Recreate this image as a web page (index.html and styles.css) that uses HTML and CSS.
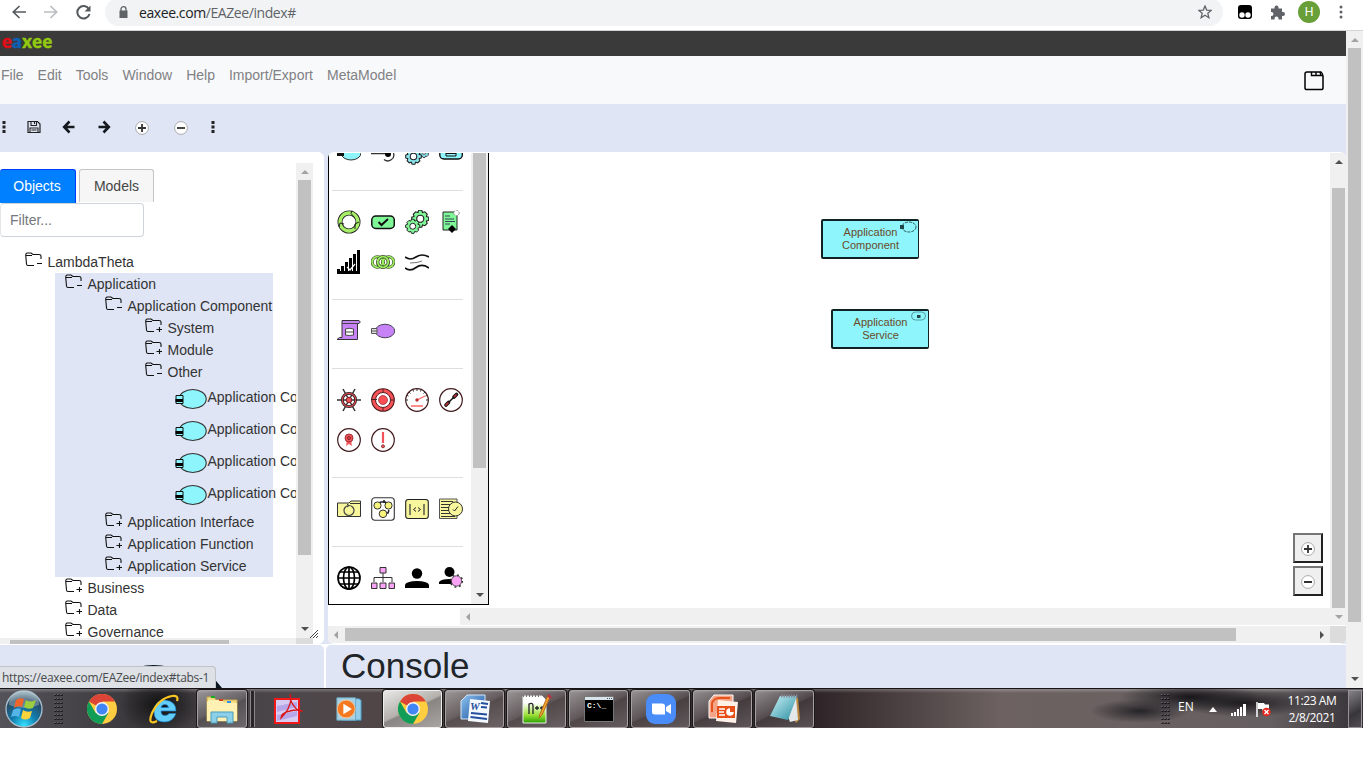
FILE: index.html
```html
<!DOCTYPE html>
<html lang="en">
<head>
<meta charset="utf-8">
<title>eaxee</title>
<link rel="stylesheet" href="styles.css">
</head>
<body>
<svg class="defs" width="0" height="0">
  <defs>
    <symbol id="folder-minus" viewBox="0 0 18 16"><path d="M4 13.500H3Q1.700 13.500 1.500 12L.7 3Q.7 1.500 2 1H6L8 2.500H14Q16 2.500 16 4V7M1 3.500H7M4 13.500H9M12 11.500H17" fill="none" stroke="#111" stroke-width="1.100"/></symbol>
    <symbol id="folder-plus" viewBox="0 0 18 16"><path d="M4 13.500H3Q1.700 13.500 1.500 12L.7 3Q.7 1.500 2 1H6L8 2.500H14Q16 2.500 16 4V7M1 3.500H7M4 13.500H9M11.500 11.500H17M14.500 9V14" fill="none" stroke="#111" stroke-width="1.100"/></symbol>
    <symbol id="component" viewBox="0 0 34 22"><ellipse cx="18.700" cy="11" rx="13.500" ry="9.500" fill="#8df5fb" stroke="#333" stroke-width="1.100"/><path d="M2 7.500H9V15.500H2Z" fill="#8df5fb" stroke="#111"/><path d="M1.500 11H9V14H1.500Z" fill="#000"/></symbol>
    <symbol id="plus" viewBox="0 0 14 14"><circle cx="7" cy="7" r="6.400" fill="#fff" stroke="#aaa"/><path d="M3 7H11M7 3V11" stroke="#333" stroke-width="1.800"/></symbol>
    <symbol id="minus" viewBox="0 0 14 14"><circle cx="7" cy="7" r="6.400" fill="#fff" stroke="#aaa"/><path d="M3 7H11" stroke="#333" stroke-width="1.800"/></symbol>
    <symbol id="dots" viewBox="0 0 4 12"><path d="M.5 0H3.500V3H.5ZM.5 4.500H3.500V7.500H.5ZM.5 9H3.500V12H.5Z" fill="#222"/></symbol>
    <symbol id="gear" viewBox="-12 -12 24 24"><path d="M-2-11H2L3-8 6-9 9-6 8-3 11-2V2L8 3 9 6 6 9 3 8 2 11H-2L-3 8-6 9-9 6-8 3-11 2V-2L-8-3-9-6-6-9-3-8Z" fill="currentColor" stroke="#222" stroke-width="1.500"/><circle r="4.600" fill="#fff" stroke="#222" stroke-width="1.500"/></symbol>
    <symbol id="chrome" viewBox="0 0 30 30"><circle cx="15" cy="15" r="15" fill="#ffcd40"/><path d="M15 15L2 7.500A15 15 0 0 1 28 7.500H15Z" fill="#db4437"/><path d="M2 7.500A15 15 0 0 0 15 30L21.500 18.700 8.500 18.700Z" fill="#0f9d58"/><circle cx="15" cy="15" r="7" fill="#f4f4f4"/><circle cx="15" cy="15" r="5.600" fill="#4285f4"/></symbol>
    <symbol id="grip" viewBox="0 0 9 32"><path d="M1.500 1V32M4.500 1V32M7.500 1V32" stroke="#15131a" stroke-width="2" stroke-dasharray="2 2"/><path d="M1 1V32M4 1V32M7 1V32" stroke="#99959a" stroke-width="1" stroke-dasharray="1 3"/></symbol>
    <linearGradient id="np" x2="0" y2="1"><stop offset=".25" stop-color="#fff"/><stop offset=".7" stop-color="#9de038"/><stop offset="1" stop-color="#28a000"/></linearGradient>
    <linearGradient id="pad" x2="1" y2="1"><stop stop-color="#c9f2f8"/><stop offset="1" stop-color="#2c8ea0"/></linearGradient>
    <linearGradient id="wb" x2="1" y2="1"><stop stop-color="#8fc4ee"/><stop offset="1" stop-color="#144b9d"/></linearGradient>
    <radialGradient id="orb" cy=".95" r=".9"><stop stop-color="#34e2ff"/><stop offset=".4" stop-color="#117cae"/><stop offset=".8" stop-color="#284962"/><stop offset="1" stop-color="#7c9aaa"/></radialGradient>
  </defs>
</svg>

<header class="browser">
  <svg class="ic back" viewBox="0 0 14 14"><path d="M14 7H1.500M7.500 1L1.300 7 7.500 13" fill="none" stroke="#55585c" stroke-width="1.700"/></svg>
  <svg class="ic fwd" viewBox="0 0 14 14"><path d="M0 7H12.500M6.500 1L12.700 7 6.500 13" fill="none" stroke="#bbbdc0" stroke-width="1.700"/></svg>
  <svg class="ic reload" viewBox="0 0 15 15"><path d="M12.800 4A6.200 6.200 0 1 0 13.500 9" fill="none" stroke="#55585c" stroke-width="2"/><path d="M14.500 .5V6.500H8.500Z" fill="#55585c"/></svg>
  <div class="address">
    <svg class="lock" viewBox="0 0 9 12"><path d="M.5 4.500H8.500V12H.5Z" fill="#5f6368"/><path d="M2 5V3A2.500 2.300 0 0 1 7 3V5" fill="none" stroke="#5f6368" stroke-width="1.300"/></svg>
    <span class="url"><b>eaxee.com</b>/EAZee/index#</span>
    <svg class="star" viewBox="0 0 14 14"><path d="M7 1L8.700 5.100 13.200 5.400 9.800 8.300 10.900 12.700 7 10.300 3.100 12.700 4.200 8.300 .8 5.400 5.300 5.100Z" fill="none" stroke="#5f6368" stroke-width="1.300"/></svg>
  </div>
  <svg class="ic ext" viewBox="0 0 14 14"><rect width="14" height="14" rx="3" fill="#000"/><circle cx="4" cy="10" r="2.700" fill="#fff"/><circle cx="10" cy="10" r="2.700" fill="#fff"/></svg>
  <svg class="ic puzzle" viewBox="0 0 15 15"><path d="M1 3.500H4.500V2.500A2 2 0 0 1 8.500 2.500V3.500H12V7H13A2 2 0 0 1 13 11H12V14.500H8.500V13.500A2 2 0 0 0 4.500 13.500V14.500H1V11H1.500A2 2 0 0 0 1.500 7H1Z" fill="#5f6368"/></svg>
  <span class="avatar">H</span>
  <svg class="ic menu" viewBox="0 0 4 14"><circle cx="2" cy="2" r="1.500" fill="#5f6368"/><circle cx="2" cy="7" r="1.500" fill="#5f6368"/><circle cx="2" cy="12" r="1.500" fill="#5f6368"/></svg>
</header>

<div class="viewport">
  <div class="page">
    <div class="brand"><span class="r">e</span><span class="b">a</span><span class="g">xee</span></div>
    <nav class="nav">
      <a>File</a><a>Edit</a><a>Tools</a><a>Window</a><a>Help</a><a>Import/Export</a><a>MetaModel</a>
      <svg class="windows" viewBox="0 0 20 20"><path d="M17 1H3Q1 1 1 3V17Q1 18.600 3 18.600H17Q19 18.600 19 17V5Q18.500 2 17 1Z" fill="none" stroke="#000" stroke-width="1.500"/><path d="M7.500 1V4.500H19M12 1V4.500M16 1L17 4.500" fill="none" stroke="#000" stroke-width="1.400"/></svg>
    </nav>
    <div class="toolbar">
      <svg class="dots"><use href="#dots"/></svg>
      <svg class="save" viewBox="0 0 14 14"><path d="M1 1.500H10.500L13 4V12.500H1Z" fill="none" stroke="#222" stroke-width="1.200"/><path d="M4 1V5.500H9.500V1M7.500 1V4M3 12.500V8H11V12.500M4.500 10H9.500" fill="none" stroke="#222" stroke-width="1.100"/></svg>
      <svg class="tb" viewBox="0 0 14 14"><path d="M12.500 7H3M7.500 1.500L2.200 7 7.500 12.500" fill="none" stroke="#15181c" stroke-width="2.600"/></svg>
      <svg class="tb" viewBox="0 0 14 14"><path d="M1.500 7H11M6.500 1.500L11.800 7 6.500 12.500" fill="none" stroke="#15181c" stroke-width="2.600"/></svg>
      <svg class="zin"><use href="#plus"/></svg>
      <svg class="zout"><use href="#minus"/></svg>
      <svg class="dots last"><use href="#dots"/></svg>
    </div>

    <div class="workspace">
      <aside class="explorer">
        <div class="explorer-row">
          <div class="explorer-body">
            <div class="tabs"><span class="tab on">Objects</span><span class="tab">Models</span></div>
            <div class="filter">Filter...</div>
            <div class="tree">
              <div class="node l0"><svg><use href="#folder-minus"/></svg>LambdaTheta</div>
              <div class="selected">
                <div class="node l1"><svg><use href="#folder-minus"/></svg>Application</div>
                <div class="node l2"><svg><use href="#folder-minus"/></svg>Application Component</div>
                <div class="node l3"><svg><use href="#folder-plus"/></svg>System</div>
                <div class="node l3"><svg><use href="#folder-plus"/></svg>Module</div>
                <div class="node l3"><svg><use href="#folder-minus"/></svg>Other</div>
                <div class="leaf"><svg><use href="#component"/></svg>Application Component</div>
                <div class="leaf"><svg><use href="#component"/></svg>Application Component</div>
                <div class="leaf"><svg><use href="#component"/></svg>Application Component</div>
                <div class="leaf"><svg><use href="#component"/></svg>Application Component</div>
                <div class="node l2"><svg><use href="#folder-plus"/></svg>Application Interface</div>
                <div class="node l2"><svg><use href="#folder-plus"/></svg>Application Function</div>
                <div class="node l2"><svg><use href="#folder-plus"/></svg>Application Service</div>
              </div>
              <div class="node out"><svg><use href="#folder-plus"/></svg>Business</div>
              <div class="node out"><svg><use href="#folder-plus"/></svg>Data</div>
              <div class="node out"><svg><use href="#folder-plus"/></svg>Governance</div>
            </div>
          </div>
          <div class="vs vs-tree"><i class="up pale"></i><div class="thumb"></div><i class="down"></i></div>
          <svg class="resize" viewBox="0 0 8 8"><path d="M0 8L8 0M3 8L8 3M6 8L8 6" stroke="#444"/></svg>
        </div>
        <div class="hs-tree"><div class="thumb"></div><div class="corner"></div></div>
      </aside>

      <main class="designer">
        <div class="upper">
          <div class="canvas-wrap">
            <div class="palette">
              <div class="palette-body">
                <div class="group first">
                  <svg viewBox="0 0 24 24"><ellipse cx="14" cy="12" rx="10" ry="7" fill="#8df5fb" stroke="#333"/><path d="M0 9H7V15H0Z" fill="#111"/></svg>
                  <svg viewBox="0 0 24 24"><path d="M0 12.500H18M22.500 12A6 6 0 0 1 13 18.500" fill="none" stroke="#333" stroke-width="1.300"/><circle cx="17" cy="13" r="3"/></svg>
                  <svg viewBox="0 0 24 24" class="aqua"><use href="#gear" x="13" y="4" width="12" height="14"/><use href="#gear" x="0" y="7" width="17" height="17"/></svg>
                  <svg viewBox="0 0 24 24"><rect x=".8" y="5" width="22.500" height="13" rx="4" fill="#8df5fb" stroke="#111" stroke-width="1.400"/><path d="M7 10H17V15H7ZM7 12.500H17" fill="none" stroke="#111"/></svg>
                </div>
                <div class="group">
                  <svg viewBox="0 0 24 24"><g fill="none"><circle cx="12" cy="12" r="9" stroke="#222" stroke-width="5"/><circle cx="12" cy="12" r="9" stroke="#a8ef68" stroke-width="3.300"/><path d="M15 .500L14 3.500 17.500 7.500M2 17L3 13 7 14M22 12L18 14 18 19" stroke="#222" stroke-width="1"/></g></svg>
                  <svg viewBox="0 0 24 24"><rect x=".8" y="6" width="22.500" height="12.500" rx="4" fill="#80f797" stroke="#111" stroke-width="1.500"/><path d="M7.500 12L10.500 15 17 9" fill="none" stroke="#111" stroke-width="2"/></svg>
                  <svg viewBox="0 0 24 24" class="mint"><use href="#gear" x="6" y="-.5" width="18.500" height="18.500"/><use href="#gear" x="0" y="8.500" width="15.500" height="15.500"/></svg>
                  <svg viewBox="0 0 24 24"><path d="M4 2H18V20H4Z" fill="#80f797" stroke="#222"/><path d="M6 6H11M6 9H15M6 11.500H16M6 14H11" stroke="#345"/><circle cx="17.500" cy="3" r="2.700" fill="#fff" stroke="#777" stroke-width=".8" stroke-dasharray="2 1"/><path d="M13 15L17 19 13 23 9 19Z"/></svg>
                  <svg viewBox="0 0 24 24"><path d="M0 24V19H3V24ZM4 24V16H7V24ZM8 24V12H11V24ZM12 24V8H15V24ZM16 24V4H19V24ZM20 24V0H23V24ZM3 21H22V24H3Z"/><path d="M10 17L13 20 18 14" fill="none" stroke="#fff" stroke-width="1.200"/></svg>
                  <svg viewBox="0 0 24 24"><g fill="none"><g stroke="#342" stroke-width="3"><circle cx="6.500" cy="12" r="5.300"/><circle cx="17.500" cy="12" r="5.300"/><circle cx="12" cy="12" r="5.300"/></g><g stroke="#9dec60" stroke-width="1.800"><circle cx="6.500" cy="12" r="5.300"/><circle cx="17.500" cy="12" r="5.300"/></g><circle cx="12" cy="12" r="5.300" stroke="#342" stroke-width="3"/><circle cx="12" cy="12" r="5.300" stroke="#9dec60" stroke-width="1.800"/></g></svg>
                  <svg viewBox="0 0 24 24"><path d="M0 7Q5 11 11 7T24 7M0 18Q5 22 11 17.500T24 18" fill="none" stroke="#111" stroke-width="1.700"/><path d="M5 13L12 12.500 17 11" stroke="#555" stroke-width=".8" fill="none"/></svg>
                </div>
                <div class="group">
                  <svg viewBox="0 0 24 24"><path d="M5 1.500H22Q24.500 3 22 4.500H20.500V20.500H0L2.500 18.500H5Z" fill="#c783f5" stroke="#333"/><path d="M5 4.500H22M8.500 10Q12 8.500 16.500 10V16Q12 17 8.500 16Z" fill="#fff" stroke="#444"/><path d="M8.500 13H16.500" stroke="#444"/></svg>
                  <svg viewBox="0 0 24 24"><ellipse cx="14" cy="12" rx="9.700" ry="6.800" fill="#c783f5" stroke="#445"/><path d="M.5 9.500H6V14.500H.5ZM0 12H6" fill="#ddd" stroke="#555"/></svg>
                </div>
                <div class="group">
                  <svg viewBox="0 0 24 24"><path d="M0 12H24M6 1L18 23M18 1L6 23" stroke="#333" stroke-width="1.500"/><circle cx="12" cy="12" r="6.700" fill="none" stroke="#222" stroke-width="2.700"/><circle cx="12" cy="12" r="6.700" fill="none" stroke="#d6484d" stroke-width="1.200"/><circle cx="12" cy="12" r="2.800" fill="#ed5058" stroke="#722"/></svg>
                  <svg viewBox="0 0 24 24"><circle cx="12" cy="12" r="11.300" fill="#fb5257" stroke="#521e20" stroke-width="1.100"/><circle cx="12" cy="12" r="7.500" fill="#fff" stroke="#521e20"/><circle cx="12" cy="12" r="4.500" fill="#fb4f55" stroke="#8b2d31" stroke-width=".7"/><path d="M0 11.500H6M12 1V4M12 20V23M20 12H23" stroke="#422"/></svg>
                  <svg viewBox="0 0 24 24"><circle cx="12" cy="12" r="11.300" fill="#fff" stroke="#421b1d" stroke-width="1.200"/><path d="M3 12H1M21 12H23M12 3V1M5.500 5.500L4 4M18.500 5.500L20 4M3.500 8L2 7.500M20.500 8L22 7.500M8.500 3.500L8 2M15.500 3.500L16 2" stroke="#333"/><path d="M12 12L20 8M6 18H18" stroke="#f66" stroke-width="1.300"/><circle cx="12" cy="12" r="1.700" fill="#b33"/></svg>
                  <svg viewBox="0 0 24 24"><circle cx="12" cy="12" r="11.300" fill="#fff" stroke="#421b1d" stroke-width="1.200"/><path d="M6 18L18 6" stroke="#111" stroke-width="1.500"/><path d="M7 17L9.500 14.500M15 9L17.500 6.500" stroke="#111" stroke-width="3.600" stroke-linecap="round"/><path d="M7 17L9 15M15.500 8.500L17 7" stroke="#a63036" stroke-width="1.800" stroke-linecap="round"/></svg>
                  <svg viewBox="0 0 24 24"><circle cx="12" cy="12" r="11.300" fill="#fff" stroke="#421b1d" stroke-width="1.200"/><path d="M10 12L9 18 12 16 15 18 14 12Z" fill="#f95a5f"/><circle cx="12" cy="10" r="4" fill="#f4545a" stroke="#9e3236"/><circle cx="12" cy="10" r="1.500" fill="none" stroke="#611" stroke-width=".8"/></svg>
                  <svg viewBox="0 0 24 24"><circle cx="12" cy="12" r="11.300" fill="#fff" stroke="#421b1d" stroke-width="1.200"/><path d="M12 4V15" stroke="#f45359" stroke-width="2.200"/><circle cx="12" cy="18.300" r="1.500" fill="#f45359" stroke="#722" stroke-width=".8"/></svg>
                </div>
                <div class="group">
                  <svg viewBox="0 0 24 24"><path d="M.5 6H12L14 4H23.500V19.500H.5Z" fill="#f8f69c" stroke="#333"/><path d="M13 6.500H23" stroke="#333"/><circle cx="12" cy="13.500" r="5" fill="none" stroke="#444" stroke-width="1.200"/><path d="M10 7L12 8.500 10 10" fill="none" stroke="#333"/></svg>
                  <svg viewBox="0 0 24 24"><rect x=".7" y=".7" width="22.600" height="22.600" rx="3" fill="#fff" stroke="#333" stroke-width="1.100"/><path d="M8 6L10 5H14L16 6M13 3V6M18 13L17 16H14" fill="none" stroke="#222" stroke-width="1.500"/><g fill="#f8f47c" stroke="#333"><circle cx="6.500" cy="8.500" r="3.600"/><circle cx="17.500" cy="8.500" r="3.600"/><circle cx="12" cy="16.800" r="3.800"/></g></svg>
                  <svg viewBox="0 0 24 24"><rect x=".7" y="2.500" width="22.600" height="19" rx="2.500" fill="#f8f69c" stroke="#222" stroke-width="1.100"/><path d="M5 7V18M19 7V18" stroke="#333" stroke-width="1.200"/><path d="M11 10.500L8.500 12.500 11 14.500M13 10.500L15.500 12.500 13 14.500" fill="none" stroke="#222"/></svg>
                  <svg viewBox="0 0 24 24"><path d="M.5 2H18V21.500H.5Z" fill="#f8f69c" stroke="#555"/><path d="M2 4.500H14M2 7.500H11M2 10.500H10M2 13.500H10M2 16.500H12M2 19.500H16" stroke="#333"/><circle cx="16.500" cy="12" r="7" fill="#f8f69c" stroke="#333"/><path d="M14 12.500L15.500 14 19 9.500" fill="none" stroke="#222"/></svg>
                </div>
                <div class="group">
                  <svg viewBox="0 0 24 24"><g fill="none" stroke="#000" stroke-width="1.700"><circle cx="12" cy="12" r="11"/><ellipse cx="12" cy="12" rx="5.500" ry="11"/><path d="M12 1V23M1 12H23M3 6H21M3 18H21"/></g></svg>
                  <svg viewBox="0 0 24 24"><path d="M12 6V16M3 16V11.500H21V16" fill="none" stroke="#333"/><path d="M9 1.500H15V7H9ZM.5 17H6V22.500H.5ZM9 17H15V22.500H9ZM18 17H23.500V22.500H18Z" fill="#f8a3f3" stroke="#333"/></svg>
                  <svg viewBox="0 0 24 24"><circle cx="12" cy="7.500" r="5.200"/><path d="M0 22V18.500Q2 15 12 15T24 18.500V22Z"/></svg>
                  <svg viewBox="0 0 24 24"><circle cx="10.500" cy="6" r="5"/><path d="M0 18V16Q2 13 10.500 13L15 14V18Z"/><circle cx="17.500" cy="15" r="6" fill="none" stroke="#333" stroke-width="1.600" stroke-dasharray="1.800 2.900"/><circle cx="17.500" cy="15" r="5.200" fill="#f8a3f3" stroke="#333" stroke-width=".8"/></svg>
                </div>
              </div>
              <div class="vs vs-palette"><div class="thumb"></div><i class="down"></i></div>
            </div>
            <div class="canvas">
              <div class="shape s1">Application<br>Component
                <svg viewBox="0 0 18 12"><ellipse cx="10" cy="6" rx="7" ry="5" fill="none" stroke="#244" stroke-width=".9" stroke-dasharray="3 1"/><path d="M1 4H5V8H1Z" fill="#244"/></svg></div>
              <div class="shape s2">Application<br>Service
                <svg viewBox="0 0 18 12"><rect x="2.500" y="1" width="14" height="8" rx="4" fill="none" stroke="#488" stroke-width=".8"/><path d="M8 4H11.500V7H8Z" fill="#244"/></svg></div>
              <div class="zoomers"><span><svg><use href="#plus"/></svg></span><span><svg><use href="#minus"/></svg></span></div>
            </div>
            <div class="hs-inner"><i class="left pale"></i></div>
          </div>
          <div class="vs vs-canvas"><i class="up"></i><div class="thumb"></div><i class="down pale"></i></div>
        </div>
        <div class="hs-outer"><i class="left pale"></i><div class="thumb"></div><i class="right"></i><div class="corner"></div></div>
      </main>
    </div>

    <div class="bottom">
      <div class="overview">
        <svg class="blob" viewBox="0 0 110 24"><path d="M18 3Q34-1 49 3ZM92 12L102 24H92Z" fill="#0c1720"/></svg>
        <div class="status">https://eaxee.com/EAZee/index#tabs-1</div>
      </div>
      <div class="console">Console</div>
    </div>
  </div>
  <div class="vs vs-page"><i class="up pale"></i><div class="thumb"></div><i class="down"></i></div>
</div>

<footer class="taskbar">
  <svg class="start" viewBox="0 0 38 38"><circle cx="19" cy="19" r="18" fill="url(#orb)" stroke="#a9bfcb" stroke-width="1.300"/><path d="M4 15A15 14 0 0 1 34 15Q19 21 4 15" fill="#fff" opacity=".28"/><path d="M11 10Q15 7 19 9L17 17Q13 15 9 18Z" fill="#f1652a"/><path d="M21 10Q25 13 31 10L28 18Q23 20 19 17Z" fill="#9dce3e"/><path d="M8 20Q12 17 16 19L14 27Q10 25 6 27Z" fill="#55b5e9"/><path d="M18 20Q22 23 27 21L25 28Q20 31 16 28Z" fill="#ffd33c"/></svg>
  <svg class="grip g1"><use href="#grip"/></svg>
  <svg class="pin"><use href="#chrome"/></svg>
  <svg class="pin ie" viewBox="0 0 30 30"><path d="M24 17H12Q12 21.500 16 21.500Q19 21.500 20 19.500H27Q24 28 15.500 28Q5 28 5 17.500Q5 7 15.500 6Q27 7 27 17ZM12 13.500H19.500Q19 10.500 16 10.500Q12.500 10.500 12 13.500" fill="#62cdf9" stroke="#1a7fc4" stroke-width=".7" fill-rule="evenodd"/><path d="M28 7Q30 1 23 2Q10 4 3 19Q-2 32 8 27" fill="none" stroke="#f8c522" stroke-width="2.200"/></svg>
  <div class="task explorer-task"><svg viewBox="0 0 34 30"><path d="M2 3H9L11 6H32V27H2Z" fill="#f4dc85" stroke="#c9a94d"/><path d="M4 6H17L19 9H32V27H2V8Z" fill="#fff1b4"/><path d="M6 2H10V4H6Z" fill="#18aa22"/><path d="M14 5H18V7H14Z" fill="#d24124"/><path d="M22 7H26V9H22Z" fill="#2992e7"/><path d="M6 29V18H28V29H22V23H12V29Z" fill="#8ccfe9" stroke="#499bbb"/></svg></div>
  <span class="stack"></span>
  <svg class="pin pdf" viewBox="0 0 30 30"><path d="M2 5H26V29H2Z" fill="#d7cdf2" stroke="#f01818" stroke-width="2"/><path d="M4 12L24 8V13L4 18ZM4 21L24 17V22L4 27" fill="#a996e5" opacity=".7"/><path d="M17 0L18 5Q17 15 8 24Q8 19 17 17Q24 15 29 17Q23 18 17 5" fill="none" stroke="#d8181b" stroke-width="1.400"/></svg>
  <svg class="pin wmp" viewBox="0 0 30 30"><path d="M8 4H26L28 6V27H8Z" fill="#93cde9" stroke="#3f8db2"/><path d="M2 3H22V27H2Z" fill="#a8d2e4" stroke="#6ba7c3"/><circle cx="12" cy="15" r="9.500" fill="#f3781f" stroke="#fcc08a"/><path d="M9 9.500L18 15 9 20.500Z" fill="#fff"/></svg>
  <div class="tasks">
    <div class="task current"><svg viewBox="0 0 30 30"><use href="#chrome"/></svg></div>
    <div class="task"><svg viewBox="0 0 30 30"><path d="M7 1H25V25H1V7Z" fill="url(#wb)" stroke="#d3e6f8"/><path d="M10 5L30 7 28 29 8 27Z" fill="#f4f8ff"/><path d="M21 9L28 10M21 13L27 13.500M11 19L27 20.500M10.500 23L27 25" stroke="#244f9d" stroke-width="1.800"/><text x="10" y="16" class="office">W</text></svg></div>
    <div class="task"><svg viewBox="0 0 30 30"><path d="M1 2H20L24 6V29H1Z" fill="url(#np)" stroke="#eee"/><path d="M1 2H19" stroke="#777" stroke-width="2" stroke-dasharray="1 2"/><path d="M7 20V10Q11 8 11 12V20M13 14H17M15 12V16M18 14H22M20 12V16" fill="none" stroke="#222" stroke-width="1.300"/><path d="M28 3L20 21 17 24 18 20 26 1Z" fill="#f2a728" stroke="#b86922"/><path d="M25 2L27 0 30 3 28 5" fill="#b63342"/></svg></div>
    <div class="task"><svg viewBox="0 0 30 30"><path d="M.5 2.500H29.500V27.500H.5Z" fill="#000" stroke="#777"/><path d="M1 3H29V6H1Z" fill="#d9e3ea"/><path d="M23 4.500H28" stroke="#456" stroke-dasharray="1 1"/><text x="3" y="14" class="cmd">C:\_</text></svg></div>
    <div class="task"><svg viewBox="0 0 30 30"><rect width="30" height="30" rx="9" fill="#4a8df8"/><path d="M6 9.500H16Q19 9.500 19 12V20.500H9Q6 20.500 6 18ZM20 13L25 10V20L20 17Z" fill="#fff"/></svg></div>
    <div class="task"><svg viewBox="0 0 30 30"><path d="M6 1H25V24H1V7Z" fill="#f5a587" stroke="#fff"/><path d="M4 18V9Q6 4 12 4H22" fill="none" stroke="#e6531c" stroke-width="2"/><path d="M10 6L30 8 28 29 8 27Z" fill="#fff1e7"/><path d="M9 12H27V24H9Z" fill="#e95018"/><path d="M11 15H17M11 18H16M11 21H17" stroke="#fff" stroke-width="1.600"/><circle cx="22" cy="18" r="3.800" fill="#fff"/><path d="M22 18V14H26V18Z" fill="#e95018"/></svg></div>
    <div class="task"><svg viewBox="0 0 30 30"><path d="M11 3L28 4 30 25 26 29Z" fill="#b98942"/><path d="M11 2L26 3 28 26 20 28Z" fill="#e4e8ea"/><path d="M10 2H27L18 26 0 22Z" fill="url(#pad)"/><path d="M11 2H28" stroke="#889" stroke-width="3" stroke-dasharray="1.500 1"/></svg></div>
  </div>
  <svg class="grip g2"><use href="#grip"/></svg>
  <span class="lang">EN</span>
  <svg class="caret" viewBox="0 0 8 5"><path d="M0 5L4 0 8 5Z" fill="#fff"/></svg>
  <svg class="signal" viewBox="0 0 15 12"><path d="M0 12V9H2V12ZM3 12V8H5V12ZM6 12V5H8V12ZM9 12V3H11V12ZM12 12V0H15V12Z" fill="#fff"/></svg>
  <svg class="flag" viewBox="0 0 15 15"><path d="M1 0V15" stroke="#fff" stroke-width="1.500"/><path d="M2 1H8L9 2.500H13V9H7L6 7H2Z" fill="#fff"/><circle cx="10.500" cy="10" r="4.300" fill="#e32a20"/><path d="M8.500 8L12.500 12M12.500 8L8.500 12" stroke="#fff" stroke-width="1.400"/></svg>
  <div class="clock">11:23 AM<br>2/8/2021</div>
  <span class="peek"></span>
</footer>
</body>
</html>
```
FILE: styles.css
```css
* { box-sizing: border-box; }
html { overflow: hidden; background: #fff; }
body { margin: 0; width: 1363px; font: 14px "Liberation Sans", Arial, sans-serif; color: #333; }
svg { display: block; flex: none; }
.defs { position: absolute; }

/* browser bar */
.browser { height: 31px; display: flex; align-items: center; padding: 0 0 6px 12px; border-bottom: 1px solid #d4d4d6; }
.ic { width: 14px; height: 14px; }
.fwd { margin-left: 18px; }
.reload { width: 15px; height: 15px; margin-left: 18px; }
.address { width: 1118px; height: 28px; margin: 0 15px 0 14px; padding: 0 11px 0 14px; display: flex; align-items: center; background: #f1f3f4; border-radius: 14px; }
.lock { width: 9px; height: 12px; }
.url { margin-left: 11px; font: 14px "Open Sans", sans-serif; letter-spacing: -.42px; color: #5f6368; flex: 1; }
.url b { font-weight: 400; color: #202124; }
.star { width: 14px; height: 14px; }
.puzzle { margin-left: 18px; width: 15px; height: 15px; }
.avatar { width: 22px; height: 22px; margin-left: 13px; border-radius: 50%; background: #689f38; color: #fff; font-size: 12px; line-height: 22px; text-align: center; }
.menu { width: 4px; margin-left: 19px; }

.viewport { display: flex; height: 657px; }
.page { width: 1346px; display: flex; flex-direction: column; background: #dfe5f5; }
.brand { height: 25px; background: #3a3a3a; padding-left: 2px; font: 900 18px/20px Lato, sans-serif; letter-spacing: .7px; -webkit-text-stroke: .5px; }
.r { color: #e30d17; }
.b { color: #0a61b8; }
.g { color: #93c90e; }
.nav { height: 48px; padding: 11px 22px 0 1px; display: flex; gap: 14px; background: #f8f9fb; color: #808184; line-height: 17px; }
.windows { width: 20px; height: 20px; margin: 4px 0 0 auto; }
.toolbar { height: 48px; display: flex; align-items: center; padding: 0 0 2px 2px; }
.toolbar svg { width: 14px; height: 14px; margin-left: 21px; }
.toolbar .dots { width: 4px; height: 12px; margin-left: 0; }
.toolbar .zin { margin: 1px 0 0 24px; }
.toolbar .zout { margin: 1px 0 0 25px; }
.toolbar .last { margin-left: 23px; }

/* scrollbars */
.vs { flex: none; background: #f0f0f0; display: flex; flex-direction: column; align-items: center; }
.thumb { background: #c1c1c1; flex: none; }
.vs .thumb { width: 13px; }
.up, .down { border: 4px solid transparent; width: 0; height: 0; flex: none; }
.up { border-top: 0; border-bottom-color: #505050; }
.down { border-bottom: 0; border-top-color: #505050; margin-top: auto; }
.left, .right { border: 4px solid transparent; width: 0; height: 0; flex: none; }
.left { border-left: 0; border-right-color: #505050; }
.right { border-right: 0; border-left-color: #505050; }
.up.pale { border-bottom-color: #a3a3a3; }
.down.pale { border-top-color: #a3a3a3; }
.left.pale { border-right-color: #a3a3a3; }
.corner { background: #dcdcdc; flex: none; }
.vs-page { width: 17px; padding: 7px 0; }
.vs-page .thumb { height: 574px; margin-top: 6px; }

/* object explorer */
.workspace { display: flex; gap: 4px; height: 492px; }
.explorer { width: 324px; height: 492px; padding-top: 11px; background: #fff; border-radius: 0 6px 6px 0; overflow: hidden; }
.explorer-row { display: flex; height: 475px; align-items: flex-end; }
.explorer-body { width: 296px; height: 475px; overflow: hidden; padding-top: 6px; }
.tabs { display: flex; gap: 3px; height: 34px; }
.tab { width: 75px; height: 33px; border: 1px solid #c5c5c5; border-bottom: 0; border-radius: 3px 3px 0 0; background: #f6f6f6; color: #454545; text-align: center; line-height: 33px; }
.tab.on { width: 76px; height: 34px; background: #007fff; border-color: #003eff; border-left: 0; color: #fff; padding-right: 1px; }
.filter { width: 144px; height: 34px; border: 1px solid #ced4da; border-left-color: #e4e7ea; border-radius: 4px; padding-left: 9px; line-height: 32px; color: #74787d; }
.tree { padding-top: 14px; }
.node { height: 22px; display: flex; align-items: center; line-height: 22px; white-space: nowrap; }
.node svg { width: 18px; height: 16px; margin: -5px 4.500px 0 0; }
.l0 { padding-left: 25px; }
.selected { margin-left: 55px; width: 218px; background: #dfe5f5; }
.l1 { padding-left: 10px; }
.l2 { padding-left: 50px; }
.l3 { padding-left: 90px; }
.out { padding-left: 65px; }
.leaf { height: 32px; padding-left: 119px; display: flex; line-height: 28px; white-space: nowrap; }
.leaf svg { width: 34px; height: 22px; margin: 5px -.5px 0 0; }
.vs-tree { width: 17px; height: 475px; padding: 7px 0 7px; }
.vs-tree .thumb { height: 375px; margin-top: 6px; }
.resize { width: 8px; height: 8px; margin-left: -3px; }
.hs-tree { width: 313px; height: 6px; padding: 2px 0 0 10px; background: #f0f0f0; display: flex; }
.hs-tree .thumb { width: 219px; height: 4px; }
.hs-tree .corner { width: 17px; height: 6px; margin: -2px 0 0 auto; }

/* designer */
.designer { width: 1018px; height: 492px; padding-top: 1px; background: #fff; border-radius: 6px; overflow: hidden; display: flex; flex-direction: column; }
.upper { display: flex; height: 472px; }
.canvas-wrap { width: 1002px; height: 472px; display: flex; flex-wrap: wrap; align-content: flex-start; }
.palette { width: 161px; height: 452px; border: 1px solid #000; border-top: 0; display: flex; }
.palette-body { width: 142px; height: 451px; overflow: hidden; padding: 0 0 0 3px; }
.group { width: 131px; border-top: 1px solid #dedede; padding: 19px 0 25px 5px; display: grid; grid-template-columns: repeat(4, 24px); column-gap: 10px; row-gap: 16px; }
.group svg { width: 24px; height: 24px; }
.group.first { margin-top: -32px; border-top-color: transparent; }
.aqua { color: #8be5ee; }
.mint { color: #80f797; }
.vs-palette { width: 17px; height: 451px; padding-bottom: 7px; }
.vs-palette .thumb { height: 315px; }
.canvas { width: 841px; height: 455px; position: relative; }
.shape { position: absolute; width: 98px; height: 40px; border: 1.500px solid #122; border-width: 2px 1px 2px 2px; border-radius: 2px; background: #8df5fb; color: #6b4a28; font-size: 11px; line-height: 13px; text-align: center; padding-top: 5px; }
.shape svg { position: absolute; right: 1px; top: 0; width: 18px; height: 12px; }
.s1 { left: 332px; top: 66px; }
.s2 { left: 342px; top: 156px; }
.zoomers { position: absolute; left: 804px; top: 380px; display: grid; gap: 3px; }
.zoomers span { width: 30px; height: 30px; border: 2px solid; border-color: #767676 #212121 #212121 #767676; background: #efefef; display: grid; place-items: center; padding-top: 1px; }
.zoomers svg { width: 14px; height: 14px; }
.hs-inner { width: 870px; height: 17px; margin-left: 132px; padding-left: 6px; background: #f0f0f0; display: flex; align-items: center; }
.vs-canvas { width: 16px; height: 472px; padding: 7px 0 6px 1px; }
.vs-canvas .thumb { height: 420px; margin-top: 24px; }
.hs-outer { height: 17px; margin-top: 1px; padding-left: 6px; background: #f0f0f0; display: flex; align-items: center; }
.hs-outer .thumb { width: 891px; height: 13px; margin-left: 7px; }
.hs-outer .right { margin-left: auto; }
.hs-outer .corner { width: 16px; height: 17px; margin-left: 6px; }

/* bottom panels */
.bottom { flex: 1; min-height: 0; padding-top: 1px; background: #fff; display: flex; gap: 2px; }
.overview { width: 324px; background: #dfe5f5; border-radius: 0 5px 0 0; display: flex; flex-direction: column; justify-content: flex-end; position: relative; overflow: hidden; }
.blob { position: absolute; left: 120px; top: 19px; width: 110px; height: 24px; }
.status { position: relative; width: 216px; height: 22px; border: 1px solid #bfc2c7; border-left: 0; border-bottom: 0; border-radius: 0 4px 0 0; background: #dee1e6; color: #484a4d; font: 12px/21px "Open Sans", sans-serif; letter-spacing: -.3px; padding-left: 2px; white-space: nowrap; }
.console { width: 1020px; background: #dfe5f5; border-radius: 5px 0 0 0; padding-left: 15px; font-size: 35px; line-height: 42px; color: #212529; overflow: hidden; }

/* taskbar */
.taskbar { height: 40px; display: flex; align-items: center; padding-left: 5px; border-top: 1px solid #171417; color: #fff;
  background: radial-gradient(ellipse 70px 14px at 1190px 8px, #17161a, transparent), radial-gradient(ellipse 70px 14px at 1245px 14px, #1d1b1e, transparent), radial-gradient(ellipse 50px 12px at 1140px 22px, #252327, transparent), radial-gradient(ellipse 40px 30px at 160px 16px, #111, transparent), linear-gradient(rgba(255,255,255,.25), transparent 4px), linear-gradient(90deg, #55535a, #3c393d 130px, #4d474b 290px, #504648 370px, #302629 820px, #6d6261 1000px, #665f61 1270px, #343237); }
.start { width: 38px; height: 38px; }
.grip { width: 9px; height: 32px; }
.g1 { margin-left: 11px; }
.pin { width: 30px; height: 30px; margin-left: 24px; }
.ie { margin-left: 32px; }
.task { width: 59px; height: 38px; border: 1px solid #a5a0a1; border-radius: 3px; display: grid; place-items: center; background: linear-gradient(155deg, rgba(255,255,255,.45), rgba(255,255,255,.16) 48%, rgba(255,255,255,.08) 52%, rgba(255,255,255,.2)); box-shadow: 0 0 0 1px #1b181a; }
.task svg { width: 30px; height: 30px; }
.task.current { background: linear-gradient(155deg, #e8e8e6, #b4b1ad 48%, #898583 52%, #aaa5a1); border-color: #eee; }
.office { font: italic bold 11px "Liberation Serif", serif; fill: #244f9d; }
.cmd { font: bold 8px "Liberation Mono", monospace; fill: #fff; }
.task.explorer-task { width: 50px; margin-left: 18px; }
.explorer-task svg { width: 34px; height: 30px; }
.stack { width: 8px; height: 36px; border-right: 1px solid #8a8587; box-shadow: inset -3px 0 #29262a, inset -4px 0 #8a8587; }
.pdf { margin-left: 18px; }
.wmp { width: 28px; margin-left: 32px; }
.tasks { display: flex; gap: 3px; margin-left: 20px; }
.g2 { margin-left: 347px; }
.lang { width: 17px; margin: -4px 0 0 8px; font: 12px "Open Sans", sans-serif; }
.caret { width: 8px; height: 5px; margin: 2px 0 0 14px; }
.signal { width: 15px; height: 12px; margin: 2px 0 0 14px; }
.flag { width: 15px; height: 15px; margin: 2px 0 0 10px; }
.clock { width: 58px; margin-left: 12px; text-align: center; font: 12px/17px "Open Sans", sans-serif; letter-spacing: -.4px; white-space: nowrap; }
.peek { width: 14px; height: 38px; margin-left: 7px; border: 1px solid #969296; background: linear-gradient(150deg, #858287, #39363b 60%, #514e53); }
```
